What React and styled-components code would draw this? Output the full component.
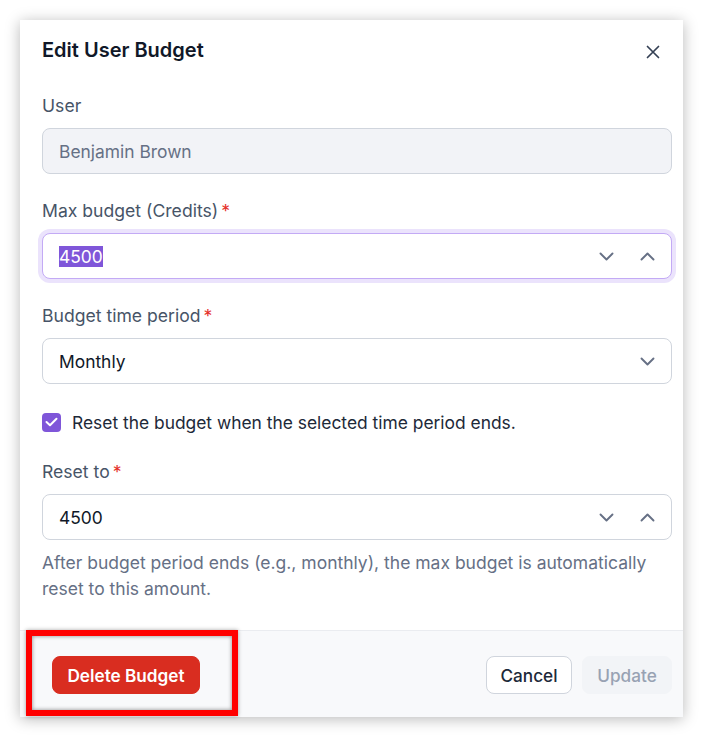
import styled, { createGlobalStyle } from "styled-components";

const GlobalStyle = createGlobalStyle`
  body {
    margin: 0;
    background: #ffffff;
    font-family: "Inter", "Liberation Sans", sans-serif;
  }
`;

const Page = styled.div`
  padding: 20px;
`;

const Modal = styled.div`
  width: 663px;
  background: #ffffff;
  display: flex;
  flex-direction: column;
  box-shadow: 0 2px 14px rgba(0, 0, 0, 0.28);
`;

const Header = styled.div`
  display: flex;
  align-items: center;
  justify-content: space-between;
  padding: 16px 23px 0 22px;
  height: 28px;
`;

const Title = styled.h2`
  margin: 0;
  font-size: 20px;
  line-height: 28px;
  font-weight: 600;
  color: #101828;
`;

const CloseButton = styled.button`
  border: 0;
  background: none;
  padding: 0;
  display: flex;
  margin-top: 4px;
  cursor: pointer;
`;

const Body = styled.div`
  display: flex;
  flex-direction: column;
  gap: 25px;
  padding: 30px 11px 28px 22px;
`;

const Field = styled.div`
  display: flex;
  flex-direction: column;
`;

const Label = styled.label`
  font-size: 17.6px;
  line-height: 24px;
  color: #475467;
  margin-bottom: 10px;
  span {
    color: #e5302a;
    margin-left: 3px;
  }
`;

const InputBox = styled.div`
  height: 46px;
  box-sizing: border-box;
  display: flex;
  align-items: center;
  justify-content: space-between;
  padding: 0 16px;
  border-radius: 8px;
  border: 1px solid ${(p) => (p.$focused ? "#c3aaf5" : "#d0d5dd")};
  background: ${(p) => (p.$disabled ? "#f2f3f7" : "#ffffff")};
  box-shadow: ${(p) => (p.$focused ? "0 0 0 4px #ebe3fc" : "none")};
  font-size: 17.4px;
  color: ${(p) => (p.$disabled ? "#667085" : "#101828")};
`;

const Selected = styled.span`
  background: #7f56d9;
  color: #ffffff;
  line-height: 21px;
`;

const Spinner = styled.div`
  display: flex;
  align-items: center;
  gap: 26px;
`;

const CheckRow = styled.label`
  display: flex;
  align-items: center;
  gap: 11px;
  min-height: 26px;
  font-size: 17.4px;
  color: #1d2939;
`;

const CheckBox = styled.span`
  width: 19px;
  height: 19px;
  border-radius: 4px;
  background: #7f56d9;
  display: flex;
  align-items: center;
  justify-content: center;
`;

const Helper = styled.p`
  margin: 10px 0 0;
  font-size: 17.5px;
  line-height: 26px;
  color: #667085;
`;

const Footer = styled.div`
  position: relative;
  display: flex;
  align-items: center;
  justify-content: space-between;
  padding: 25px 11px 23px 32px;
  border-top: 1px solid #eaecf0;
  background: #f8f9fb;
`;

const Actions = styled.div`
  display: flex;
  gap: 10px;
`;

const Button = styled.button`
  height: 38px;
  box-sizing: border-box;
  border-radius: 8px;
  font-family: inherit;
  font-size: 17.2px;
  font-weight: ${(p) => (p.$variant === "danger" ? 600 : 500)};
  padding: 0;
  cursor: pointer;
  ${(p) =>
    p.$variant === "danger" &&
    `background: #d92d20; color: #ffffff; border: 1px solid #d92d20; width: 148px;`}
  ${(p) =>
    p.$variant === "secondary" &&
    `background: #ffffff; color: #1d2939; border: 1px solid #d0d5dd; width: 86px;`}
  ${(p) =>
    p.$variant === "disabled" &&
    `background: #f2f4f7; color: #98a2b3; border: 1px solid #f2f4f7; width: 90px;`}
`;

const Highlight = styled.div`
  position: absolute;
  left: 6px;
  top: -1px;
  width: 212px;
  height: 86px;
  box-sizing: border-box;
  border: 6px solid #ff0000;
  box-shadow: inset 0 0 4px rgba(0, 0, 0, 0.45), 0 0 4px rgba(0, 0, 0, 0.35);
  pointer-events: none;
`;

const Chevron = ({ up }) => (
  <svg width="15" height="9" viewBox="0 0 15 9" fill="none">
    <polyline
      points={up ? "1.5,7.5 7.5,1.5 13.5,7.5" : "1.5,1.5 7.5,7.5 13.5,1.5"}
      stroke="#667085"
      strokeWidth="1.9"
      strokeLinecap="round"
      strokeLinejoin="round"
    />
  </svg>
);

const CloseIcon = () => (
  <svg width="14" height="14" viewBox="0 0 14 14" fill="none">
    <path d="M1.5 1.5L12.5 12.5M12.5 1.5L1.5 12.5" stroke="#344054" strokeWidth="1.7" strokeLinecap="round" />
  </svg>
);

const CheckIcon = () => (
  <svg width="13" height="10" viewBox="0 0 13 10" fill="none">
    <polyline
      points="1.5,5 5,8.3 11.5,1.7"
      stroke="#ffffff"
      strokeWidth="2"
      strokeLinecap="round"
      strokeLinejoin="round"
    />
  </svg>
);

const App = () => {
  return (
    <>
      <GlobalStyle />
      <Page>
        <Modal>
          <Header>
            <Title>Edit User Budget</Title>
            <CloseButton aria-label="Close">
              <CloseIcon />
            </CloseButton>
          </Header>
          <Body>
            <Field>
              <Label>User</Label>
              <InputBox $disabled>Benjamin Brown</InputBox>
            </Field>
            <Field>
              <Label>
                Max budget (Credits)<span>*</span>
              </Label>
              <InputBox $focused>
                <Selected>4500</Selected>
                <Spinner>
                  <Chevron />
                  <Chevron up />
                </Spinner>
              </InputBox>
            </Field>
            <Field>
              <Label>
                Budget time period<span>*</span>
              </Label>
              <InputBox>
                Monthly
                <Chevron />
              </InputBox>
            </Field>
            <CheckRow>
              <CheckBox>
                <CheckIcon />
              </CheckBox>
              Reset the budget when the selected time period ends.
            </CheckRow>
            <Field>
              <Label>
                Reset to<span>*</span>
              </Label>
              <InputBox>
                4500
                <Spinner>
                  <Chevron />
                  <Chevron up />
                </Spinner>
              </InputBox>
              <Helper>
                After budget period ends (e.g., monthly), the max budget is
                automatically reset to this amount.
              </Helper>
            </Field>
          </Body>
          <Footer>
            <Button $variant="danger">Delete Budget</Button>
            <Actions>
              <Button $variant="secondary">Cancel</Button>
              <Button $variant="disabled">Update</Button>
            </Actions>
            <Highlight />
          </Footer>
        </Modal>
      </Page>
    </>
  );
};

export default App;
